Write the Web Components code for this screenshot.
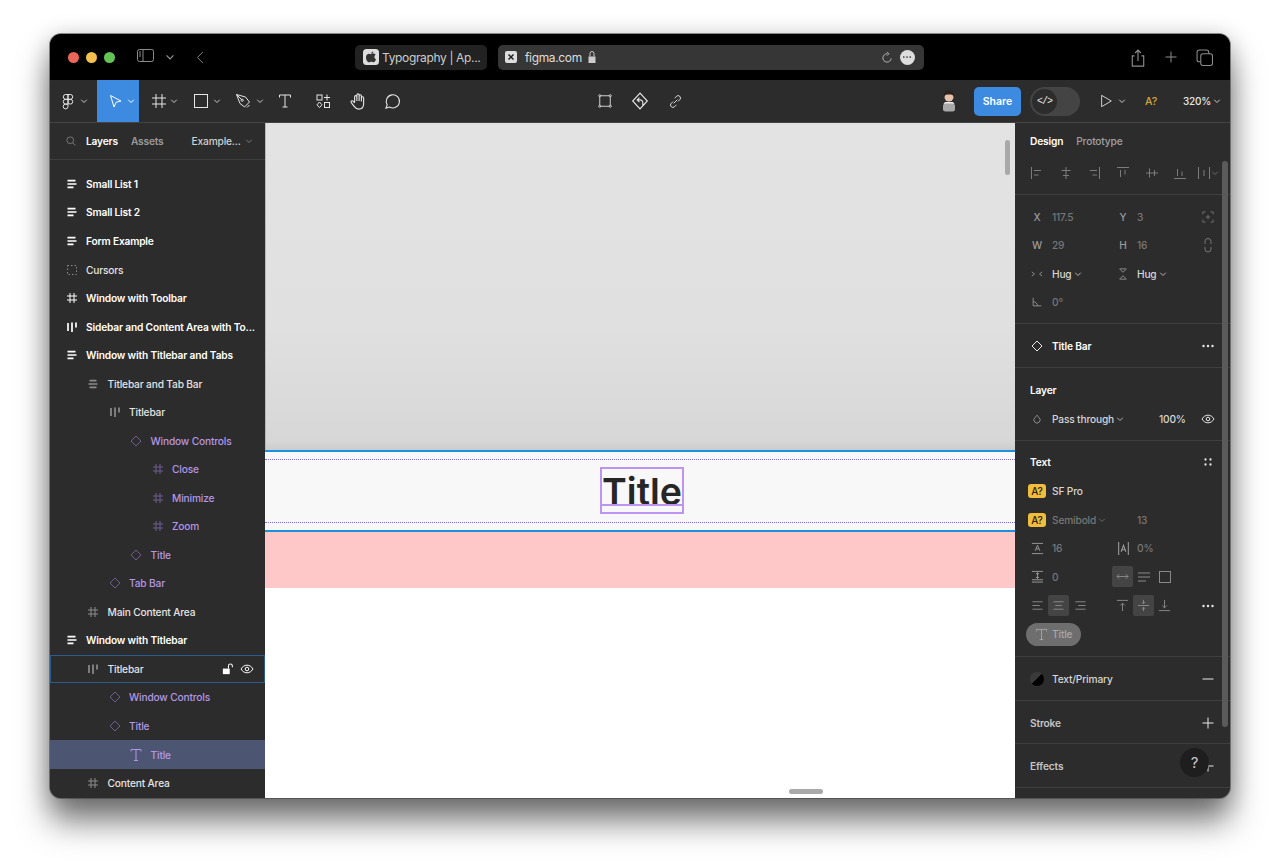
<!DOCTYPE html>
<html lang="en">
<head>
<meta charset="utf-8">
<title>Figma in Safari</title>
<style>
  html, body { margin: 0; background: #fff; }
  body { padding: 34px 50px 0; height: 865px; box-sizing: border-box; overflow: hidden; font-family: Inter, "Liberation Sans", sans-serif; }
</style>
</head>
<body>
<mac-window>
  <safari-bar slot="titlebar"></safari-bar>
  <figma-toolbar slot="toolbar"></figma-toolbar>
  <layers-panel slot="left">
    <layer-row icon="hash" tone="comp" style="margin-top:-18.9px"></layer-row>
    <layer-row icon="vlist" tone="bold">Small List 1</layer-row>
    <layer-row icon="vlist" tone="bold">Small List 2</layer-row>
    <layer-row icon="vlist" tone="bold">Form Example</layer-row>
    <layer-row icon="dashed" tone="plain">Cursors</layer-row>
    <layer-row icon="hash" tone="bold">Window with Toolbar</layer-row>
    <layer-row icon="hlist" tone="bold">Sidebar and Content Area with To...</layer-row>
    <layer-row icon="vlist" tone="bold">Window with Titlebar and Tabs</layer-row>
    <layer-row icon="clist" tone="plain" depth="1">Titlebar and Tab Bar</layer-row>
    <layer-row icon="hlist" tone="plain" depth="2">Titlebar</layer-row>
    <layer-row icon="diamond" tone="comp" depth="3">Window Controls</layer-row>
    <layer-row icon="hash" tone="comp" depth="4">Close</layer-row>
    <layer-row icon="hash" tone="comp" depth="4">Minimize</layer-row>
    <layer-row icon="hash" tone="comp" depth="4">Zoom</layer-row>
    <layer-row icon="diamond" tone="comp" depth="3">Title</layer-row>
    <layer-row icon="diamond" tone="comp" depth="2">Tab Bar</layer-row>
    <layer-row icon="hash" tone="plain" depth="1">Main Content Area</layer-row>
    <layer-row icon="vlist" tone="bold">Window with Titlebar</layer-row>
    <layer-row icon="hlist" tone="plain" depth="1" hovered>Titlebar</layer-row>
    <layer-row icon="diamond" tone="comp" depth="2">Window Controls</layer-row>
    <layer-row icon="diamond" tone="comp" depth="2">Title</layer-row>
    <layer-row icon="text" tone="comp" depth="3" selected>Title</layer-row>
    <layer-row icon="hash" tone="plain" depth="1">Content Area</layer-row>
  </layers-panel>
  <canvas-view slot="center"></canvas-view>
  <design-panel slot="right"></design-panel>
</mac-window>

<script>
const ICONS = {
  chev: '<path d="M2.5 5.5 8 11l5.5-5.5"/>',
  figma: '<path d="M8 1.5H5.7a2.4 2.4 0 0 0 0 4.8H8zM8 1.5h2.3a2.4 2.4 0 0 1 0 4.8H8zM8 6.3H5.7a2.4 2.4 0 0 0 0 4.8H8zM8 11.1H5.7A2.4 2.4 0 1 0 8 13.5z"/><circle cx="10.3" cy="8.7" r="2.4"/>',
  move: '<path d="M3.5 2.5 14 8l-4.8 1.2L7 14z"/>',
  frame: '<path d="M5 1v14M11 1v14M1 5h14M1 11h14"/>',
  rect: '<rect x="1.5" y="1.5" width="13" height="13"/>',
  pen: '<path d="M1.5 1.5 10.5 4 14.5 9 9.5 14 5 10.5zM1.5 1.5l5 5"/><circle cx="7.2" cy="7.2" r="1.1"/><path d="M12 14.5l2.5-2.5"/>',
  text: '<path d="M2.5 4.5V2h11v2.5M8 2v12M5.5 14h5"/>',
  comps: '<rect x="2" y="2" width="5" height="5"/><rect x="9.5" y="9.5" width="5" height="5"/><path d="M12 1.5v6M9 4.5h6M4.5 9 7 11.8 4.5 14.6 2 11.8z"/>',
  hand: '<path d="M5 9V4.2a1 1 0 0 1 2 0V8M7 7.5V2.7a1 1 0 0 1 2 0V8M9 7.5V3.4a1 1 0 0 1 2 0V8.5M11 8.5V5.2a1 1 0 0 1 2 0v5.3c0 3-1.8 4.7-4.3 4.7-2.2 0-3.2-1-4.3-2.6L2 9.4c-.7-1 .7-2.2 1.6-1.3L5 9.6"/>',
  bubble: '<path d="M1.8 14.2 3 11a6.2 6.2 0 1 1 2.2 2.2z"/>',
  transform: '<path d="M3.2 2h9.6M3.2 14h9.6M2 3.2v9.6M14 3.2v9.6"/><circle cx="2" cy="2" r="1.2"/><circle cx="14" cy="2" r="1.2"/><circle cx="2" cy="14" r="1.2"/><circle cx="14" cy="14" r="1.2"/>',
  back: '<path d="M8 1 1.5 8 8 15 14.5 8zM10.5 12V9.5A2.5 2.5 0 0 0 8 7H5.5M7.5 5l-2 2 2 2"/>',
  link: '<path d="M7 4.5 9 2.5a2.5 2.5 0 0 1 3.6 3.5l-2 2M9 11.5 7 13.5A2.5 2.5 0 0 1 3.4 10l2-2M6 10l4-4"/>',
  play: '<path d="M3 1.5 14 8 3 14.5z"/>',
  search: '<circle cx="7" cy="7" r="4.5"/><path d="M10.3 10.3 14 14"/>',
  vlist: '<path class="b" d="M2.5 3.7h8M2.5 7h9M2.5 10.3h6"/>',
  clist: '<path class="b" d="M3.5 3.7h7M2.5 7h9M3.5 10.3h7"/>',
  hlist: '<path class="b" d="M3 3v8M7 2.5v9.5M11 2.5v5"/>',
  hash: '<path d="M5 2v10M9 2v10M2 5h10M2 9h10"/>',
  dashed: '<path stroke-dasharray="1.5 2" d="M2.5 2.5h9v9h-9z"/>',
  diamond: '<path d="M7 2 12 7 7 12 2 7z"/>',
  serif: '<path d="M2 3.5V1.5h10v2M7 1.5v11M5 12.5h4"/>',
  lock: '<path class="f" d="M1.5 6.5h7V13h-7z"/><path d="M3 6.5V3.5a2 2 0 0 1 4 0v3"/>',
  eye: '<path d="M1 7c1.5-2.5 3.5-3.8 6-3.8S11.5 4.5 13 7c-1.5 2.5-3.5 3.8-6 3.8S2.5 9.5 1 7z"/><circle cx="7" cy="7" r="1.8"/>',
  alignL: '<path d="M1.5 1v12M4 4.5h7M4 9h4.5"/>',
  alignC: '<path d="M7 1v12M2.5 4.5h9M4 9.5h6"/>',
  alignR: '<path d="M12.5 1v12M3 4.5h7M5.5 9H10"/>',
  alignT: '<path d="M1 1.5h12M4.5 4v7M9 4v4.5"/>',
  alignM: '<path d="M1 7h12M4.5 2.5v9M9.5 4v6"/>',
  alignB: '<path d="M1 12.5h12M4.5 3v7M9 5.5V10"/>',
  distribute: '<path d="M1.5 1v12M12.5 1v12M7 4v6"/>',
  fit: '<path d="M1 4V1h3M10 1h3v3M13 10v3h-3M4 13H1v-3M7 4.5v5M4.5 7h5"/>',
  chain: '<path d="M4 6V3.5a3 3 0 0 1 6 0V6M4 9v2a3 3 0 0 0 6 0V9"/>',
  hugH: '<path d="M1 4.5 4 7 1 9.5M13 4.5 10 7l3 2.5"/>',
  hugV: '<path d="M3 1h8M3.5 1.5 7 5l3.5-3.5M3 13h8M3.5 12.5 7 9l3.5 3.5"/>',
  angle: '<path d="M2.5 2v9.5H12M2.5 6.5c2.5 0 5 2.3 5 5"/>',
  dots: '<circle cx="2.5" cy="7" r="1.2" class="f"/><circle cx="7" cy="7" r="1.2" class="f"/><circle cx="11.5" cy="7" r="1.2" class="f"/>',
  four: '<circle cx="3.5" cy="3.5" r="1.6" class="f"/><circle cx="10.5" cy="3.5" r="1.6" class="f"/><circle cx="3.5" cy="10.5" r="1.6" class="f"/><circle cx="10.5" cy="10.5" r="1.6" class="f"/>',
  drop: '<path d="M7 2.5 4.8 5.3a3.6 3.6 0 1 0 4.4 0z"/>',
  lineH: '<path d="M1 1.5h12M1 12.5h12M4.5 9.5 7 3.5l2.5 6M5.5 7.5h3"/>',
  spacing: '<path d="M2.5 1v12M11.5 1v12M4.8 10 7 4l2.2 6M5.6 8.2h2.8"/>',
  para: '<path d="M1 1.5h12M1 10.5h12M1 13h12M7 3v6M5.3 4.5 7 3l1.7 1.5M5.3 7.500 7 9l1.7-1.5"/>',
  arrows: '<path d="M1 7h12M3.5 4.5 1 7l2.5 2.5M10.5 4.5 13 7l-2.5 2.5"/>',
  lines: '<path d="M1 3h12M1 7h12M1 11h8"/>',
  box: '<rect x="1.5" y="1.5" width="11" height="11"/>',
  tL: '<path d="M1.5 3h11M1.5 7h8M1.5 11h11"/>',
  tC: '<path d="M1.5 3h11M3.5 7h7M1.5 11h11"/>',
  tR: '<path d="M1.5 3h11M4.5 7h8M1.5 11h11"/>',
  vT: '<path d="M1 1.5h12M7 4.5V13M4.5 7 7 4.5 9.5 7"/>',
  vM: '<path d="M1 7h12M7 1v4M5.3 3.5 7 5l1.7-1.5M7 13V9M5.3 10.5 7 9l1.7 1.5"/>',
  vB: '<path d="M1 12.5h12M7 1v8.5M4.5 7 7 9.5 9.5 7"/>',
  minus: '<path d="M1.5 7h11"/>',
  plus: '<path d="M1.5 7h11M7 1.5v11"/>',
  bigT: '<path d="M1.5 3.5V1.5h11v2M7 1.5v11M5 12.5h4"/>',
  sidebar: '<rect x=".5" y=".5" width="16" height="12" rx="2"/><path d="M6 .5v12M2 3h2M2 5h2M2 7h2"/>',
  caretLeft: '<path d="M7.5 1 1.5 7l6 6"/>',
  reload: '<path d="M11 8a4.5 4.5 0 1 1-4-5M6.5 1l2 2-2 2"/>',
  share: '<path d="M4 6H2v9h10V6h-2M7 10.5V1M4.5 3.5 7 1l2.5 2.500"/>',
  tabs: '<rect x="1" y="1" width="11" height="11" rx="2"/><rect x="4.5" y="4.5" width="11" height="11" rx="2" fill="#000"/>'
};

class BaseElement extends HTMLElement {
  constructor() {
    super();
    this.attachShadow({ mode: "open" });
    this.shadowRoot.appendChild(this.constructor.template.content.cloneNode(true));
  }
  static makeTemplate(html) {
    const template = document.createElement("template");
    template.innerHTML = html;
    return template;
  }
}

// box size comes from the size attribute, viewBox from the box attribute
class FigIcon extends HTMLElement {
  constructor() {
    super();
    this.attachShadow({ mode: "open" });
  }
  connectedCallback() {
    const name = this.getAttribute("name");
    const size = this.getAttribute("size") || 14;
    const box = this.getAttribute("box") || 14;
    const sw = this.getAttribute("sw") || 1;
    this.shadowRoot.innerHTML = `
      <style>
        :host { display: inline-flex; flex: none; width: ${size}px; height: ${size}px; }
        svg { display: block; fill: none; stroke: currentColor; stroke-width: ${sw}; overflow: visible; }
        .b { stroke-width: 1.7; }
        .f { fill: currentColor; stroke: none; }
      </style>
      <svg width="${size}" height="${size}" viewBox="0 0 ${box} ${box}">${ICONS[name] || ""}</svg>`;
  }
}

class MacWindow extends BaseElement {
  static get template() {
    return BaseElement.makeTemplate(`
      <style>
        :host {
          display: block;
          height: 764px;
          border-radius: 11px;
          box-shadow: 0 0 0 1px rgba(60,60,60,.55), 0 24px 32px rgba(0,0,0,.5), 0 4px 24px rgba(0,0,0,.24);
        }
        .clip { display: flex; flex-direction: column; height: 100%; border-radius: 11px; overflow: hidden; background: #2c2c2c; }
        .main { flex: 1; display: flex; min-height: 0; }
        ::slotted([slot=left]), ::slotted([slot=right]) { flex: none; width: 215px; }
        ::slotted([slot=center]) { flex: 1; min-width: 0; }
      </style>
      <div class="clip">
        <slot name="titlebar"></slot>
        <slot name="toolbar"></slot>
        <div class="main">
          <slot name="left"></slot>
          <slot name="center"></slot>
          <slot name="right"></slot>
        </div>
      </div>`);
  }
}

class SafariBar extends BaseElement {
  static get template() {
    return BaseElement.makeTemplate(`
      <style>
        :host { display: flex; align-items: center; height: 46px; background: #000; color: #aaa; font: 400 12px Inter, "Liberation Sans", sans-serif; letter-spacing: -.35px; }
        .light { width: 11px; height: 11px; border-radius: 50%; margin-right: 7px; }
        .lights { display: flex; margin-left: 18px; }
        .tab, .url { display: flex; align-items: center; height: 25px; border-radius: 5px; box-sizing: border-box; }
        .tab { width: 132px; margin-left: 146.5px; background: #222; color: #ccc; padding-left: 8px; gap: 3px; }
        .tab span { white-space: nowrap; }
        .url { width: 426px; margin-left: 11px; background: #363636; color: #ddd; padding: 0 9.5px 0 7px; gap: 8px; }
        .spacer { flex: 1; }
        .fav { flex: none; }
        .more { width: 15px; height: 15px; border-radius: 50%; background: #ddd; display: flex; align-items: center; justify-content: center; color: #333; }
      </style>
      <div class="lights">
        <div class="light" style="background:#ec6559"></div>
        <div class="light" style="background:#f4bf4f"></div>
        <div class="light" style="background:#61c454"></div>
      </div>
      <fig-icon name="sidebar" size="17" box="17" style="margin-left:15px;color:#8c8c8c"></fig-icon>
      <fig-icon name="chev" size="10" box="16" sw="1.8" style="margin:0 1px 0 11px;color:#999"></fig-icon>
      <fig-icon name="caretLeft" size="13" box="14" style="margin-left:19.5px;color:#8c8c8c"></fig-icon>
      <div class="tab">
        <svg class="fav" width="16" height="16" viewBox="0 0 16 16"><rect width="16" height="16" rx="3.5" fill="#ddd"/><path fill="#333" d="M10.3 2.5c.1 1-.9 2.3-2.1 2.2-.1-1.1 1-2.2 2.1-2.2zM8 5.2c.7 0 1.3-.6 2.5-.6.7 0 1.6.3 2.2 1.2-1.9 1.2-1.5 3.7.4 4.5-.5 1.4-1.5 3-2.5 3-.8 0-1.100-.5-2.2-.5s-1.4.5-2.2.5C4.5 13.3 3 10.8 3 8.4c0-2.4 1.5-3.7 3-3.7.8 0 1.5.5 2 .5z"/></svg>
        <span>Typography | Ap...</span>
      </div>
      <div class="url">
        <svg class="fav" width="12" height="12" viewBox="0 0 12 12"><rect width="12" height="12" rx="2" fill="#ddd"/><path d="M3.5 3.5l5 5M8.5 3.5l-5 5" stroke="#222" stroke-width="1.5"/></svg>
        <span>figma.com</span>
        <fig-icon name="lock" size="14" style="margin-left:-3px;color:#ccc"></fig-icon>
        <div class="spacer"></div>
        <fig-icon name="reload" size="13" box="14" style="color:#bbb;margin-right:-2px"></fig-icon>
        <div class="more"><fig-icon name="dots" size="10" box="14"></fig-icon></div>
      </div>
      <div class="spacer"></div>
      <fig-icon name="share" size="16" box="14" style="color:#8c8c8c;margin-right:18px"></fig-icon>
      <fig-icon name="plus" size="14" style="color:#8c8c8c;margin-right:18px"></fig-icon>
      <fig-icon name="tabs" size="17" box="16" style="color:#8c8c8c;margin-right:17px"></fig-icon>`);
  }
}

class FigmaToolbar extends BaseElement {
  static get template() {
    const chev = '<fig-icon class="c" name="chev" size="8" box="16" sw="2"></fig-icon>';
    return BaseElement.makeTemplate(`
      <style>
        :host { display: grid; grid-template-columns: 1fr auto 1fr; height: 43px; box-sizing: border-box; border-bottom: 1px solid #444; background: #2c2c2c; color: #e6e6e6; font: 500 10.5px Inter, "Liberation Sans", sans-serif; }
        .left, .mid, .right { display: flex; align-items: stretch; }
        .right { justify-content: flex-end; align-items: center; }
        .tool { display: flex; align-items: center; box-sizing: border-box; }
        .solo { justify-content: center; }
        .c { color: #c8c8c8; }
        .on { background: #3d8be0; color: #fff; }
        .on .c { color: #fff; }
        .mid .tool { width: 35.5px; }
        .share { width: 47px; height: 29px; border-radius: 5px; background: #3d8be0; color: #fff; display: flex; align-items: center; justify-content: center; font-weight: 600; }
        .toggle { width: 50px; height: 29px; margin-left: 9px; border-radius: 15px; background: #444; display: flex; align-items: center; padding-left: 2px; box-sizing: border-box; }
        .knob { width: 25px; height: 25px; border-radius: 50%; background: #2c2c2c; display: flex; align-items: center; justify-content: center; }
        .knob span { font: 400 10px "Liberation Mono", monospace; letter-spacing: -1px; }
        .zoom { margin-left: 12px; width: 26px; font-size: 10px; letter-spacing: -.2px; white-space: nowrap; }
      </style>
      <div class="left">
        <div class="tool" style="width:47px;padding-left:10px;gap:4px"><fig-icon name="figma" size="16" box="16"></fig-icon>${chev}</div>
        <div class="tool on" style="width:42px;padding-left:10px;gap:4px"><fig-icon name="move" size="16" box="16"></fig-icon>${chev}</div>
        <div class="tool" style="width:42px;padding-left:12px;gap:3px"><fig-icon name="frame" size="16" box="16"></fig-icon>${chev}</div>
        <div class="tool" style="width:42px;padding-left:12px;gap:4px"><fig-icon name="rect" size="16" box="16"></fig-icon>${chev}</div>
        <div class="tool" style="width:42px;padding-left:12px;gap:5px"><fig-icon name="pen" size="16" box="16"></fig-icon>${chev}</div>
        <div class="tool solo" style="width:40px"><fig-icon name="text" size="16" box="16"></fig-icon></div>
        <div class="tool solo" style="width:35px"><fig-icon name="comps" size="16" box="16"></fig-icon></div>
        <div class="tool solo" style="width:35px"><fig-icon name="hand" size="18" box="16"></fig-icon></div>
        <div class="tool solo" style="width:35px"><fig-icon name="bubble" size="17" box="16"></fig-icon></div>
      </div>
      <div class="mid">
        <div class="tool solo"><fig-icon name="transform" size="14" box="16"></fig-icon></div>
        <div class="tool solo"><fig-icon name="back" size="18" box="16"></fig-icon></div>
        <div class="tool solo"><fig-icon name="link" size="15" box="16"></fig-icon></div>
      </div>
      <div class="right">
        <svg width="18" height="24" viewBox="0 0 18 24" style="margin-right:16px">
          <circle cx="9" cy="8" r="4.5" fill="#e6c3aa"/>
          <path fill="#2a2320" d="M4 8C3.5 3.5 6 1.5 9 1.5S14.5 3.5 14 8C13 5.5 11 5.5 9 5.5S5 5.5 4 8z"/>
          <path fill="#efefef" d="M5 13h8l1.5 2h-11z"/>
          <rect x="3" y="14.5" width="12" height="8" rx="2.5" fill="#a8a8a8"/>
        </svg>
        <div class="share">Share</div>
        <div class="toggle"><div class="knob"><span>&lt;/&gt;</span></div></div>
        <fig-icon name="play" size="14" box="16" style="margin-left:19px"></fig-icon>
        ${chev.replace('class="c"', 'class="c" style="margin-left:5px"')}
        <span style="margin-left:19px;color:#d3a63a;width:26px">A?</span>
        <span class="zoom">320%</span>
        ${chev.replace('class="c"', 'class="c" style="margin:0 9px 0 4px"')}
      </div>`);
  }
}

class LayersPanel extends BaseElement {
  static get template() {
    return BaseElement.makeTemplate(`
      <style>
        :host { display: flex; flex-direction: column; background: #2c2c2c; min-height: 0; font: 500 10.2px Inter, "Liberation Sans", sans-serif; letter-spacing: -.17px; }
        .head { flex: none; display: flex; align-items: center; height: 36px; border-bottom: 1px solid #3f3f3f; color: #a8a8a8; }
        .head b { color: #fff; font-weight: 600; margin-left: 9px; }
        .assets { margin-left: 13px; font-weight: 600; color: #9a9a9a; }
        .page { margin-left: 28px; color: #d0d0d0; font-weight: 500; }
        .list { flex: 1; min-height: 0; overflow: hidden; }
      </style>
      <div class="head">
        <fig-icon name="search" size="12" box="16" style="margin-left:15px;color:#8c8c8c"></fig-icon>
        <b>Layers</b>
        <span class="assets">Assets</span>
        <span class="page">Example...</span>
        <fig-icon name="chev" size="8" box="16" sw="1.6" style="margin-left:4px;color:#8c8c8c"></fig-icon>
      </div>
      <div class="list"><slot></slot></div>`);
  }
}

class LayerRow extends BaseElement {
  static get template() {
    return BaseElement.makeTemplate(`
      <style>
        :host { display: flex; align-items: center; height: 28.54px; box-sizing: border-box; position: relative; color: #e4e4e4; font-weight: 500; white-space: nowrap; }
        :host([tone=bold]) { color: #fff; font-weight: 600; }
        :host([tone=comp]) { color: #b596e6; }
        :host([selected]) { background: #4c5673; }
        :host([hovered]) { box-shadow: inset 0 0 0 1px #2b5c8e; }
        .ic { margin-right: 7.5px; color: #8c8c8c; display: flex; }
        :host([tone=bold]) .ic { color: #fff; }
        :host([tone=comp]) .ic { color: #6f5d92; }
        :host([selected]) .ic { color: #b596e6; }
        .tail { display: none; position: absolute; right: 11px; top: 7px; gap: 6px; color: #fff; align-items: center; }
        :host([hovered]) .tail { display: flex; }
      </style>
      <span class="ic"></span><slot></slot>
      <div class="tail">
        <svg width="12" height="12" viewBox="0 0 14 14"><path fill="#fff" d="M1 6.5h8V13H1z"/><path fill="none" stroke="#fff" stroke-width="1.2" d="M7.5 6.5V3.5a2.3 2.3 0 0 1 4.6 0V5"/></svg>
        <fig-icon name="eye" size="14"></fig-icon>
      </div>`);
  }
  connectedCallback() {
    const depth = Number(this.getAttribute("depth") || 0);
    this.style.paddingLeft = 14.5 + depth * 21.5 + "px";
    const icon = document.createElement("fig-icon");
    icon.setAttribute("name", this.getAttribute("icon") === "text" ? "serif" : this.getAttribute("icon"));
    this.shadowRoot.querySelector(".ic").appendChild(icon);
  }
}

class CanvasView extends BaseElement {
  static get template() {
    return BaseElement.makeTemplate(`
      <style>
        :host { display: flex; flex-direction: column; position: relative; background: #fff; overflow: hidden; }
        .sky { flex: none; height: 327px; box-shadow: inset 1px 0 0 #b8b8b8; background: linear-gradient(#e3e3e3 0, #e0e0e0 62%, #d7d7d7 97%, #cccccc 100%); }
        .bar { flex: none; box-sizing: border-box; height: 82px; background: #f8f8f8; border-top: 2px solid #1d90e0; border-bottom: 2px solid #1d90e0; padding: 7px 0; }
        .guides { box-sizing: border-box; height: 64px; border-top: 1px dotted #7d68ea; border-bottom: 1px dotted #7d68ea; display: flex; align-items: flex-start; justify-content: center; padding: 7px 0 0 4px; }
        .chip { box-sizing: border-box; position: relative; width: 84px; height: 47px; border: 2px solid #bd94f2; display: flex; justify-content: center; font: 600 37.5px/45px Inter, "Liberation Sans", sans-serif; color: #262626; }
        .base { position: absolute; left: 0; right: 0; top: 35px; height: 2px; background: #bd94f2; }
        .pink { flex: none; height: 56px; background: #ffc8c8; }
        .sb-v, .sb-h { position: absolute; background: #a9a9a9; border-radius: 3px; }
        .sb-v { left: 740px; top: 17px; width: 5px; height: 35px; }
        .sb-h { left: 524px; bottom: 4px; width: 34px; height: 5px; }
      </style>
      <div class="sky"></div>
      <div class="bar"><div class="guides"><div class="chip">Title<div class="base"></div></div></div></div>
      <div class="pink"></div>
      <div class="sb-v"></div>
      <div class="sb-h"></div>`);
  }
}

class PanelSection extends BaseElement {
  static get template() {
    return BaseElement.makeTemplate(`
      <style>
        :host { display: block; box-sizing: border-box; padding: 7.5px 0 6.5px; border-bottom: 1px solid #3f3f3f; }
      </style>
      <slot></slot>`);
  }
}

class DesignPanel extends BaseElement {
  static get template() {
    return BaseElement.makeTemplate(`
      <style>
        :host { display: block; position: relative; background: #2c2c2c; color: #8a8a8a; font: 500 10.2px Inter, "Liberation Sans", sans-serif; letter-spacing: -.17px; overflow: hidden; white-space: nowrap; }
        .tabs { display: flex; align-items: center; height: 36px; padding-left: 15px; gap: 13px; }
        .tabs b { color: #fff; font-weight: 600; }
        .aligns { display: grid; grid-template-columns: repeat(7, 28.6px); height: 28px; padding-left: 8px; align-items: center; justify-items: center; color: #7c7c7c; }
        .row { display: grid; grid-template-columns: 26px 60px 25px 60px 22px; height: 28.5px; padding-left: 11px; align-items: center; }
        .text-rows .row { height: 28.67px; }
        .i { width: 22px; display: flex; justify-content: center; align-items: center; color: #9a9a9a; }
        .dim { color: #777; }
        .w { color: #d6d6d6; display: flex; align-items: center; gap: 2px; }
        .h { grid-column: 1 / 5; margin-left: 4px; color: #fff; font-weight: 600; }
        .h.soft { color: #c4c4c4; }
        .wide { grid-column: 2 / 5; color: #fff; font-weight: 600; }
        .span2 { grid-column: 2 / 4; }
        .badge { width: 18px; height: 14px; margin-left: 2px; border-radius: 3px; background: #f0bd3e; color: #2a2208; font-size: 10px; display: flex; align-items: center; justify-content: center; }
        .e { color: #e8e8e8; justify-content: center; display: flex; }
        .ic7 { color: #9c9c9c; }
        .group { display: flex; align-items: center; }
        .cell { width: 21px; height: 21px; display: flex; align-items: center; justify-content: center; border-radius: 2px; color: #8a8a8a; }
        .cell.active { background: #444; }
        .span12 { grid-column: 1 / 3; }
        .span34 { grid-column: 3 / 5; }
        .pill { grid-column: 1 / 4; height: 23px; width: 55px; border-radius: 12px; background: #6e6e6e; color: #a8a8a8; display: flex; align-items: center; padding-left: 9px; box-sizing: border-box; gap: 4px; }
        .swatch { width: 14px; height: 14px; border-radius: 50%; background: linear-gradient(135deg, #3a3a3a 50%, #000 50%); }
        .scroll { position: absolute; right: 2px; top: 38px; width: 6px; height: 566px; background: #5a5a5a; border-radius: 3px; }
        .help { position: absolute; left: 165px; top: 625px; width: 29px; height: 29px; border-radius: 50%; background: #1e1e1e; color: #c8c8c8; font-size: 15px; font-weight: 400; display: flex; align-items: center; justify-content: center; }
      </style>
      <panel-section style="padding:0;height:72px">
        <div class="tabs"><b>Design</b><span style="color:#a0a0a0">Prototype</span></div>
        <div class="aligns">
          <fig-icon name="alignL"></fig-icon><fig-icon name="alignC"></fig-icon><fig-icon name="alignR"></fig-icon>
          <fig-icon name="alignT"></fig-icon><fig-icon name="alignM"></fig-icon><fig-icon name="alignB"></fig-icon>
          <span class="group" style="margin-left:-2px"><fig-icon name="distribute"></fig-icon><fig-icon name="chev" size="8" box="16" sw="1.5"></fig-icon></span>
        </div>
      </panel-section>
      <panel-section>
        <div class="row"><span class="i">X</span><span class="dim">117.5</span><span class="i">Y</span><span class="dim">3</span><span class="i dim"><fig-icon name="fit" size="12"></fig-icon></span></div>
        <div class="row"><span class="i">W</span><span class="dim">29</span><span class="i">H</span><span class="dim">16</span><span class="i dim"><fig-icon name="chain" size="14"></fig-icon></span></div>
        <div class="row"><span class="i"><fig-icon name="hugH" size="12"></fig-icon></span><span class="w">Hug<fig-icon name="chev" size="8" box="16" sw="1.6"></fig-icon></span><span class="i"><fig-icon name="hugV" size="12"></fig-icon></span><span class="w">Hug<fig-icon name="chev" size="8" box="16" sw="1.6"></fig-icon></span></div>
        <div class="row"><span class="i"><fig-icon name="angle" size="12"></fig-icon></span><span class="dim">0°</span></div>
      </panel-section>
      <panel-section style="padding-bottom:7px">
        <div class="row"><span class="i" style="color:#e8e8e8"><fig-icon name="diamond"></fig-icon></span><span class="wide">Title Bar</span><span class="e"><fig-icon name="dots"></fig-icon></span></div>
      </panel-section>
      <panel-section style="padding-top:8px">
        <div class="row"><span class="h">Layer</span></div>
        <div class="row"><span class="i"><fig-icon name="drop" size="12"></fig-icon></span><span class="w span2">Pass through<fig-icon name="chev" size="8" box="16" sw="1.6"></fig-icon></span><span class="w" style="padding-left:22px">100%</span><span class="e"><fig-icon name="eye"></fig-icon></span></div>
      </panel-section>
      <panel-section class="text-rows" style="padding-bottom:7.3px">
        <div class="row"><span class="h">Text</span><span class="e"><fig-icon name="four" size="10"></fig-icon></span></div>
        <div class="row"><span class="badge">A?</span><span class="w">SF Pro</span></div>
        <div class="row"><span class="badge">A?</span><span class="dim group" style="gap:2px">Semibold<fig-icon name="chev" size="8" box="16" sw="1.6"></fig-icon></span><span></span><span class="dim">13</span></div>
        <div class="row"><span class="i ic7"><fig-icon name="lineH" size="13"></fig-icon></span><span class="dim">16</span><span class="i ic7"><fig-icon name="spacing" size="15"></fig-icon></span><span class="dim">0%</span></div>
        <div class="row"><span class="i ic7"><fig-icon name="para" size="13"></fig-icon></span><span class="dim">0</span><span class="cell active"><fig-icon name="arrows" size="13"></fig-icon></span><span class="group" style="gap:7px"><fig-icon name="lines"></fig-icon><fig-icon name="box"></fig-icon></span></div>
        <div class="row">
          <span class="group span12"><span class="cell" style="width:22px"><fig-icon name="tL" size="13"></fig-icon></span><span class="cell active"><fig-icon name="tC" size="13"></fig-icon></span><span class="cell" style="width:22px"><fig-icon name="tR" size="13"></fig-icon></span></span>
          <span class="group span34"><span class="cell"><fig-icon name="vT" size="13"></fig-icon></span><span class="cell active"><fig-icon name="vM" size="13"></fig-icon></span><span class="cell"><fig-icon name="vB" size="13"></fig-icon></span></span>
          <span class="e"><fig-icon name="dots"></fig-icon></span>
        </div>
        <div class="row"><span class="pill"><fig-icon name="bigT" size="13"></fig-icon>Title</span></div>
      </panel-section>
      <panel-section style="padding-bottom:7px">
        <div class="row"><span class="i"><span class="swatch"></span></span><span class="w span2" style="grid-column:2/5">Text/Primary</span><span class="e"><fig-icon name="minus"></fig-icon></span></div>
      </panel-section>
      <panel-section>
        <div class="row"><span class="h soft">Stroke</span><span class="e"><fig-icon name="plus"></fig-icon></span></div>
      </panel-section>
      <panel-section>
        <div class="row"><span class="h soft">Effects</span><span class="e"><fig-icon name="plus"></fig-icon></span></div>
      </panel-section>
      <div class="scroll"></div>
      <div class="help">?</div>`);
  }
}

customElements.define("fig-icon", FigIcon);
customElements.define("mac-window", MacWindow);
customElements.define("safari-bar", SafariBar);
customElements.define("figma-toolbar", FigmaToolbar);
customElements.define("layers-panel", LayersPanel);
customElements.define("layer-row", LayerRow);
customElements.define("canvas-view", CanvasView);
customElements.define("panel-section", PanelSection);
customElements.define("design-panel", DesignPanel);
</script>
</body>
</html>
